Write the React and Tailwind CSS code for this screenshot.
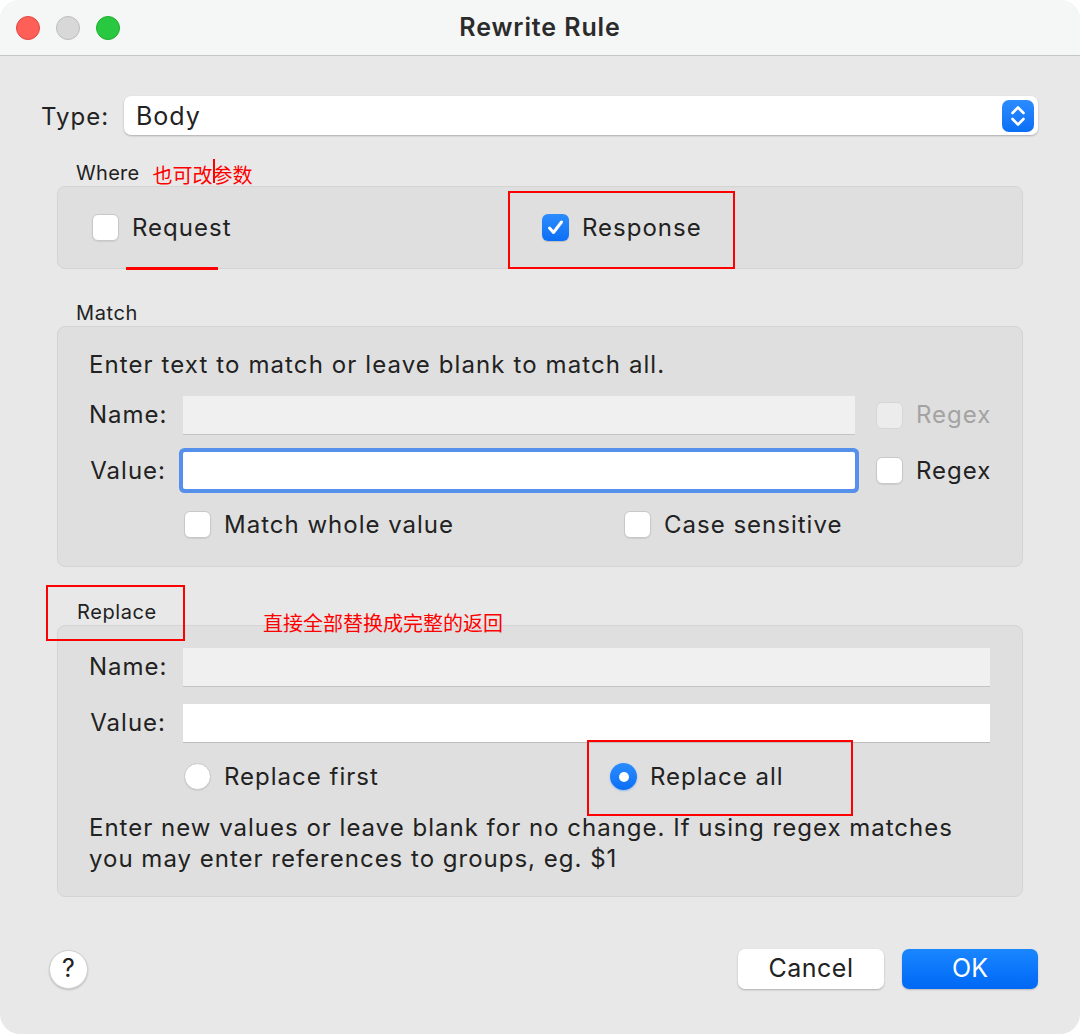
import React from 'react';

// small checkbox in the macOS style
const CheckBox = ({ checked, disabled }) => (
  <span
    className={
      checked
        ? 'flex h-[27px] w-[27px] shrink-0 items-center justify-center rounded-[6px] bg-gradient-to-b from-[#2b8cff] to-[#0a6ff5] shadow-[0_1px_1px_rgba(0,0,0,0.15)]'
        : disabled
        ? 'flex h-[27px] w-[27px] shrink-0 items-center justify-center rounded-[6px] border border-[#d6d6d6] bg-[#ececec]'
        : 'flex h-[27px] w-[27px] shrink-0 items-center justify-center rounded-[6px] border border-[#c8c8c8] bg-white shadow-[0_1px_1px_rgba(0,0,0,0.08)]'
    }
  >
    {checked && (
      <svg width="19" height="19" viewBox="0 0 19 19" fill="none">
        <path d="M3.5 10 L7.5 14.5 L15.5 4" stroke="white" strokeWidth="3" strokeLinecap="round" strokeLinejoin="round" />
      </svg>
    )}
  </span>
);

const Radio = ({ checked }) => (
  <span
    className={
      checked
        ? 'flex h-[27px] w-[27px] shrink-0 items-center justify-center rounded-full bg-gradient-to-b from-[#2b8cff] to-[#0a6ff5] shadow-[0_1px_2px_rgba(10,110,245,0.35)]'
        : 'flex h-[27px] w-[27px] shrink-0 items-center justify-center rounded-full border border-[#c8c8c8] bg-white shadow-[0_1px_1px_rgba(0,0,0,0.08)]'
    }
  >
    {checked && <span className="h-[10px] w-[10px] rounded-full bg-white" />}
  </span>
);

const Label = ({ children }) => (
  <span className="w-[77px] shrink-0 text-right text-[24px] leading-[30px] tracking-[1px] text-[#222]">{children}</span>
);

export default function App() {
  return (
    <div className="h-[1034px] w-[1080px] bg-white font-['Inter','Noto_Sans_CJK_SC',sans-serif] text-[#222]">
      <div className="flex h-full w-full flex-col overflow-hidden rounded-[20px] bg-[#e8e8e8]">
        {/* Title bar */}
        <div className="grid h-[56px] shrink-0 grid-cols-[1fr_auto_1fr] items-center border-b border-[#c6c6c6] bg-[#f5f6f6]">
          <div className="flex items-center gap-[16px] pl-[16px]">
            <span className="h-[24px] w-[24px] rounded-full border border-[#e2463f] bg-[#fe5f57]" />
            <span className="h-[24px] w-[24px] rounded-full border border-[#bdbdbd] bg-[#d8d8d8]" />
            <span className="h-[24px] w-[24px] rounded-full border border-[#1dad2b] bg-[#28c840]" />
          </div>
          <div className="text-[25px] font-semibold tracking-[0.9px] text-[#2b2b2b]">Rewrite Rule</div>
          <div />
        </div>

        {/* Type */}
        <div className="mt-[40px] flex h-[39px] items-center pl-[41px] pr-[42px]">
          <span className="mt-[3px] w-[83px] shrink-0 text-[24px] tracking-[1px]">Type:</span>
          <div className="flex h-[39px] flex-1 items-center justify-between rounded-[7px] bg-white pl-[12px] pr-[4px] shadow-[0_1px_2px_rgba(0,0,0,0.25)]">
            <span className="mt-[3px] text-[25px] tracking-[1px]">Body</span>
            <span className="flex h-[32px] w-[32px] items-center justify-center rounded-[7px] bg-gradient-to-b from-[#2b8cff] to-[#0a6ff5]">
              <svg width="20" height="24" viewBox="0 0 20 24" fill="none">
                <path d="M4.5 9 L10 3.5 L15.5 9" stroke="white" strokeWidth="2.6" strokeLinecap="round" strokeLinejoin="round" />
                <path d="M4.5 15 L10 20.5 L15.5 15" stroke="white" strokeWidth="2.6" strokeLinecap="round" strokeLinejoin="round" />
              </svg>
            </span>
          </div>
        </div>

        {/* Where */}
        <div className="relative mt-[25px] flex h-[26px] items-center pl-[76px]">
          <span className="text-[20px] leading-[26px] tracking-[0.3px]">Where</span>
          <span className="relative ml-[13px] mt-[6px] text-[20px] leading-[26px] text-[#ff0000]">
            也可改参数
            <span className="absolute left-[60px] top-[-4px] h-[24px] w-[2px] bg-[#ff0000]" />
          </span>
        </div>
        <div className="relative mx-[57px] flex h-[83px] items-center rounded-[8px] border border-[#d4d4d4] bg-[#dfdfdf] pl-[34px]">
          <div className="flex w-[450px] items-center gap-[13px]">
            <CheckBox />
            <span className="text-[24px] tracking-[1px]">Request</span>
          </div>
          <div className="flex items-center gap-[13px]">
            <CheckBox checked />
            <span className="text-[24px] tracking-[1px]">Response</span>
          </div>
          {/* annotations */}
          <span className="absolute left-[68px] top-[80px] h-[3px] w-[92px] bg-[#ff0000]" />
          <span className="absolute left-[450px] top-[4px] h-[78px] w-[227px] border-2 border-[#ff0000]" />
        </div>

        {/* Match */}
        <div className="mt-[31px] flex h-[26px] items-center pl-[76px]">
          <span className="text-[20px] leading-[26px] tracking-[0.6px]">Match</span>
        </div>
        <div className="mx-[57px] flex flex-col rounded-[8px] border border-[#d4d4d4] bg-[#dfdfdf] pb-[28px] pl-[31px] pt-[23px]">
          <div className="text-[24px] leading-[30px] tracking-[1.1px]">Enter text to match or leave blank to match all.</div>
          <div className="mt-[16px] flex h-[38px] items-center">
            <Label>Name:</Label>
            <div className="ml-[17px] h-[38px] w-[672px] bg-[#f0f0f0] shadow-[0_1px_0_rgba(0,0,0,0.12)]" />
            <div className="ml-[21px] flex items-center gap-[13px]">
              <CheckBox disabled />
              <span className="text-[24px] tracking-[1px] text-[#a3a3a3]">Regex</span>
            </div>
          </div>
          <div className="mt-[18px] flex h-[37px] items-center">
            <Label>Value:</Label>
            <div className="ml-[17px] h-[37px] w-[672px] rounded-[2px] bg-white shadow-[0_0_0_4px_#5590ea]" />
            <div className="ml-[21px] flex items-center gap-[13px]">
              <CheckBox />
              <span className="text-[24px] tracking-[1px]">Regex</span>
            </div>
          </div>
          <div className="mt-[22px] flex h-[27px] items-center pl-[95px]">
            <div className="flex w-[440px] items-center gap-[13px]">
              <CheckBox />
              <span className="text-[24px] tracking-[1px]">Match whole value</span>
            </div>
            <div className="flex items-center gap-[13px]">
              <CheckBox />
              <span className="text-[24px] tracking-[1px]">Case sensitive</span>
            </div>
          </div>
        </div>

        {/* Replace */}
        <div className="relative z-10 mt-[31px] flex h-[27px] items-center pl-[77px]">
          <span className="text-[20px] leading-[26px] tracking-[0.6px]">Replace</span>
          <span className="absolute left-[46px] top-[-13px] h-[56px] w-[139px] border-2 border-[#ff0000]" />
          <span className="absolute left-[263px] top-[14px] text-[20px] leading-[24px] text-[#ff0000]">直接全部替换成完整的返回</span>
        </div>
        <div className="relative mx-[57px] flex flex-col rounded-[8px] border border-[#d4d4d4] bg-[#dfdfdf] pb-[22px] pl-[31px] pr-[32px] pt-[22px]">
          <div className="flex h-[38px] items-center">
            <Label>Name:</Label>
            <div className="ml-[17px] h-[38px] flex-1 bg-[#f0f0f0] shadow-[0_1px_0_rgba(0,0,0,0.12)]" />
          </div>
          <div className="mt-[18px] flex h-[38px] items-center">
            <Label>Value:</Label>
            <div className="ml-[17px] h-[38px] flex-1 bg-white shadow-[0_1px_0_rgba(0,0,0,0.15)]" />
          </div>
          <div className="mt-[21px] flex h-[27px] items-center pl-[95px]">
            <div className="flex w-[426px] items-center gap-[13px]">
              <Radio />
              <span className="text-[24px] tracking-[1px]">Replace first</span>
            </div>
            <div className="flex items-center gap-[13px]">
              <Radio checked />
              <span className="text-[24px] tracking-[1px]">Replace all</span>
            </div>
          </div>
          <div className="mt-[22px] text-[24px] leading-[31px] tracking-[1px]">
            Enter new values or leave blank for no change. If using regex matches
            <br />
            you may enter references to groups, eg. $1
          </div>
          <span className="absolute left-[529px] top-[114px] h-[76px] w-[266px] border-2 border-[#ff0000]" />
        </div>

        {/* Footer */}
        <div className="mt-[52px] flex items-center pl-[49px] pr-[42px]">
          <span className="flex h-[39px] w-[39px] items-center justify-center rounded-full border border-[#d0d0d0] bg-white text-[25px] shadow-[0_1px_2px_rgba(0,0,0,0.2)]">?</span>
          <div className="flex-1" />
          <span className="flex h-[40px] w-[146px] items-center justify-center rounded-[7px] bg-white text-[25px] tracking-[0.5px] shadow-[0_1px_2px_rgba(0,0,0,0.25)]">Cancel</span>
          <span className="ml-[18px] flex h-[40px] w-[136px] items-center justify-center rounded-[7px] bg-gradient-to-b from-[#1a86ff] to-[#0068f5] text-[25px] text-white shadow-[0_1px_2px_rgba(0,0,0,0.2)]">OK</span>
        </div>
      </div>
    </div>
  );
}
